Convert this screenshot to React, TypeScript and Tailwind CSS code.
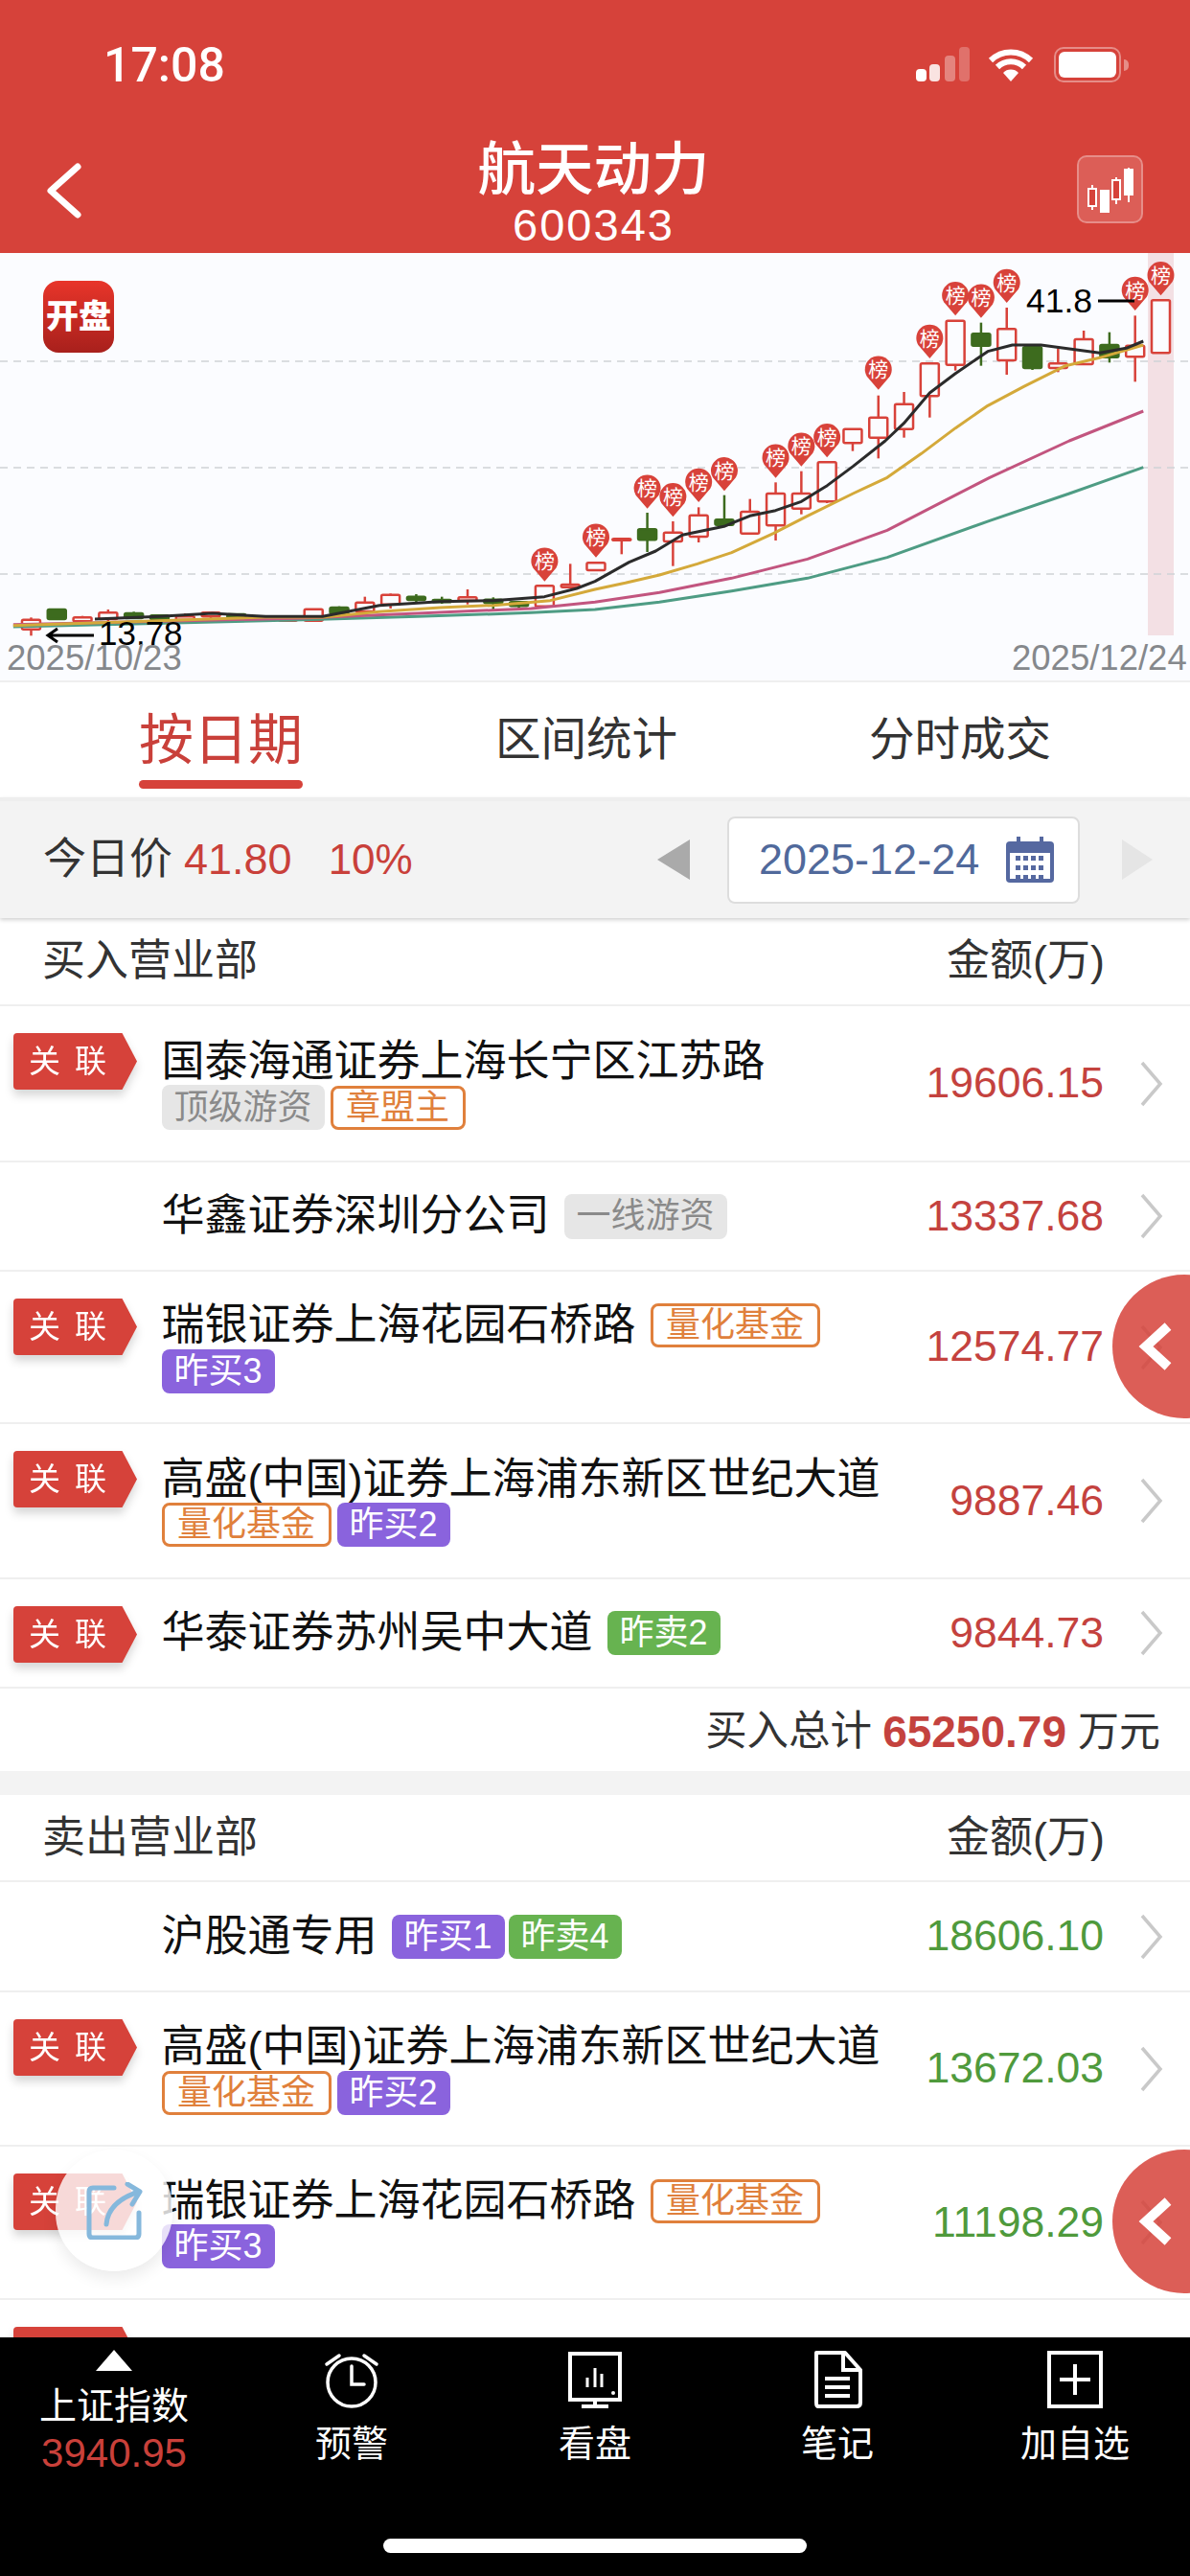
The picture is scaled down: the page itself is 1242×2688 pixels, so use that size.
const RED = '#D8423A';

// chart values are read off the zoomed picture: x in 2.525x, y in 3x units
const X = (i: number) => (82 + i * 67.66) / 2.525;
const Y = (p: number) => p / 3 - 4;

type Candle = { hi: number; top: number; bot: number; lo: number; down?: boolean; pin?: number };

const candles: Candle[] = [
  { hi: 1153, top: 1160, bot: 1190, lo: 1210 },
  { hi: 1128, top: 1128, bot: 1158, lo: 1158, down: true },
  { hi: 1148, top: 1153, bot: 1165, lo: 1165 },
  { hi: 1128, top: 1138, bot: 1158, lo: 1165 },
  { hi: 1135, top: 1140, bot: 1155, lo: 1158, down: true },
  { hi: 1147, top: 1147, bot: 1158, lo: 1158, down: true },
  { hi: 1140, top: 1150, bot: 1160, lo: 1165 },
  { hi: 1135, top: 1138, bot: 1150, lo: 1158 },
  { hi: 1143, top: 1143, bot: 1160, lo: 1160, down: true },
  { hi: 1152, top: 1152, bot: 1160, lo: 1160, down: true },
  { hi: 1150, top: 1155, bot: 1163, lo: 1163 },
  { hi: 1127, top: 1127, bot: 1163, lo: 1163 },
  { hi: 1118, top: 1122, bot: 1140, lo: 1145, down: true },
  { hi: 1088, top: 1106, bot: 1134, lo: 1142 },
  { hi: 1078, top: 1082, bot: 1112, lo: 1125 },
  { hi: 1080, top: 1088, bot: 1098, lo: 1105, down: true },
  { hi: 1088, top: 1098, bot: 1105, lo: 1110, down: true },
  { hi: 1065, top: 1090, bot: 1100, lo: 1112 },
  { hi: 1090, top: 1097, bot: 1108, lo: 1130, down: true },
  { hi: 1105, top: 1105, bot: 1117, lo: 1125, down: true },
  { hi: 1054, top: 1054, bot: 1118, lo: 1118, pin: 1040 },
  { hi: 985, top: 1050, bot: 1058, lo: 1062 },
  { hi: 982, top: 982, bot: 1005, lo: 1005, pin: 965 },
  { hi: 907, top: 907, bot: 910, lo: 955 },
  { hi: 825, top: 877, bot: 910, lo: 948, down: true, pin: 812 },
  { hi: 852, top: 887, bot: 915, lo: 992, pin: 838 },
  { hi: 808, top: 833, bot: 900, lo: 918, pin: 792 },
  { hi: 770, top: 847, bot: 863, lo: 868, down: true, pin: 757 },
  { hi: 782, top: 822, bot: 890, lo: 890 },
  { hi: 730, top: 765, bot: 865, lo: 912, pin: 716 },
  { hi: 695, top: 765, bot: 812, lo: 830, pin: 680 },
  { hi: 667, top: 667, bot: 790, lo: 795, pin: 652 },
  { hi: 563, top: 563, bot: 607, lo: 632 },
  { hi: 458, top: 527, bot: 590, lo: 655, pin: 440 },
  { hi: 447, top: 485, bot: 563, lo: 590 },
  { hi: 358, top: 358, bot: 460, lo: 527, pin: 342 },
  { hi: 224, top: 224, bot: 362, lo: 380, pin: 208 },
  { hi: 230, top: 265, bot: 302, lo: 365, down: true, pin: 215 },
  { hi: 183, top: 250, bot: 348, lo: 393, pin: 168 },
  { hi: 297, top: 307, bot: 372, lo: 378, down: true },
  { hi: 310, top: 358, bot: 372, lo: 385 },
  { hi: 255, top: 282, bot: 360, lo: 360 },
  { hi: 260, top: 300, bot: 338, lo: 355, down: true },
  { hi: 208, top: 302, bot: 337, lo: 415, pin: 192 },
  { hi: 160, top: 160, bot: 325, lo: 325, pin: 145 },
];

// [left half, right half] of each average line
const lines: { color: string; left: number[][]; right: number[][] }[] = [
  {
    color: '#4E9C84',
    left: [[35, 1182], [800, 1160], [1100, 1150], [1400, 1138]],
    right: [[0, 1128], [170, 1105], [360, 1070], [560, 1030], [770, 965], [1040, 850], [1250, 765], [1445, 683]],
  },
  {
    color: '#C2557F',
    left: [[35, 1175], [800, 1155], [1100, 1140], [1400, 1125]],
    right: [[0, 1105], [170, 1075], [360, 1030], [560, 970], [770, 880], [950, 770], [1040, 715], [1250, 600], [1445, 507]],
  },
  {
    color: '#D4A93A',
    left: [[35, 1178], [700, 1152], [850, 1152], [1000, 1135], [1160, 1122], [1300, 1115], [1450, 1100]],
    right: [[0, 1065], [80, 1045], [170, 1020], [270, 985], [360, 950], [470, 890], [560, 835], [680, 765], [770, 715], [860, 640], [950, 560], [1035, 490], [1130, 430], [1240, 365], [1330, 340], [1445, 300]],
  },
  {
    color: '#2B2B2B',
    left: [[250, 1158], [420, 1150], [560, 1140], [700, 1150], [850, 1150], [1000, 1115], [1160, 1103], [1300, 1100], [1435, 1088], [1520, 1062]],
    right: [[0, 1040], [90, 980], [160, 945], [230, 895], [340, 868], [408, 835], [476, 818], [544, 790], [612, 740], [680, 680], [765, 600], [814, 545], [882, 450], [949, 390], [1035, 320], [1100, 300], [1175, 300], [1250, 312], [1330, 325], [1400, 310], [1445, 288]],
  },
];

const linePoints = (left: number[][], right: number[][]) =>
  [...left, ...right.map(([x, y]) => [x + 1568, y])].map(([x, y]) => `${x / 2.525},${Y(y)}`).join(' ');

const KChart = () => (
  <div className="relative h-[448px] shrink-0 border-b-2 border-[#EFEFEF] bg-[#FBFCFF]">
    <svg width="1242" height="446" className="block">
      <rect x="1198" y="0" width="27" height="399" fill="#F3E0E4" />
      {[377, 488, 599].map((y) => (
        <line key={y} x1="0" x2="1242" y1={y - 264} y2={y - 264} stroke="#CFD2D6" strokeWidth="1.5" strokeDasharray="8 6" />
      ))}
      {candles.map((c, i) => {
        const color = c.down ? '#3D6B1E' : RED;
        return (
          <g key={i}>
            <line x1={X(i)} x2={X(i)} y1={Y(c.hi)} y2={Y(c.lo)} stroke={color} strokeWidth="2.5" />
            <rect
              x={X(i) - 9.5}
              y={Y(c.top)}
              width="19"
              height={Math.max(Y(c.bot) - Y(c.top), 1.5)}
              rx="1.5"
              fill={c.down ? color : '#FBFCFF'}
              stroke={color}
              strokeWidth="2.5"
            />
          </g>
        );
      })}
      {lines.map((l) => (
        <polyline key={l.color} points={linePoints(l.left, l.right)} fill="none" stroke={l.color} strokeWidth="3" strokeLinejoin="round" />
      ))}
      {candles.map((c, i) => {
        if (!c.pin) return null;
        const tip = Y(c.pin);
        const cy = tip - 21;
        return (
          <g key={i}>
            <path d={`M${X(i)} ${tip}L${X(i) - 12} ${cy + 7}A14 14 0 1 1 ${X(i) + 12} ${cy + 7}Z`} fill={RED} />
            <text x={X(i)} y={cy + 7.5} textAnchor="middle" fontSize="21" fill="#fff">榜</text>
          </g>
        );
      })}
      <path d="M98 399H52M60 392l-10 7 10 7" fill="none" stroke="#000" strokeWidth="3" />
      <text x="103" y="409" fontSize="35" fill="#000">13.78</text>
      <text x="7" y="435" fontSize="36.5" fill="#85888C">2025/10/23</text>
      <text x="1056" y="435" fontSize="36.5" fill="#85888C">2025/12/24</text>
      <text x="1071" y="62" fontSize="35.5" fill="#000">41.8</text>
      <line x1="1146" x2="1184" y1="50" y2="50" stroke="#000" strokeWidth="3" />
    </svg>
    <div className="absolute left-[45px] top-[29px] flex h-[75px] w-[74px] items-center justify-center rounded-[16px] bg-gradient-to-b from-[#E8352A] to-[#A8201C] text-[34px] font-black text-white">
      开盘
    </div>
  </div>
);

const StatusBar = () => (
  <div className="flex h-[144px] items-start justify-between pt-[44px]">
    <span className="ml-[108px] font-['Roboto'] text-[50px] font-medium leading-[48px] text-white">17:08</span>
    <div className="mr-[64px] flex items-start">
      <svg width="58" height="38" className="mt-[4px]">
        <rect x="1" y="24" width="11" height="13" rx="4" fill="#fff" />
        <rect x="15" y="19" width="11" height="18" rx="4" fill="#fff" fillOpacity="0.85" />
        <rect x="31" y="10" width="11" height="27" rx="4" fill="#fff" fillOpacity="0.35" />
        <rect x="46" y="1" width="11" height="36" rx="4" fill="#fff" fillOpacity="0.25" />
      </svg>
      <svg width="48" height="36" viewBox="0 0 48 36" className="ml-[18px] mt-[5px]">
        <path d="M3 14a30 30 0 0 1 42 0M10 21a20 20 0 0 1 28 0" fill="none" stroke="#fff" strokeWidth="6" />
        <path d="M24 36l-8-9a11 11 0 0 1 16 0z" fill="#fff" />
      </svg>
      <div className="ml-[21px] mt-[5px] flex items-center">
        <div className="h-[37px] w-[70px] rounded-[10px] border-[2.5px] border-white/40 p-[3px]">
          <div className="h-full w-full rounded-[6px] bg-white" />
        </div>
        <div className="ml-[3px] h-[12px] w-[5px] rounded-r-full bg-white/40" />
      </div>
    </div>
  </div>
);

const Header = () => (
  <div className="h-[264px] shrink-0 bg-[#D6423A]">
    <StatusBar />
    <div className="flex items-start">
      <div className="w-[118px] shrink-0 pl-[45px] pt-[25px]">
        <svg width="42" height="60" viewBox="0 0 42 60">
          <path d="M36 5L8 30l28 25" fill="none" stroke="#fff" strokeWidth="7" strokeLinecap="round" strokeLinejoin="round" />
        </svg>
      </div>
      <div className="flex-1 pr-[3px] text-center text-white">
        <div className="text-[60.5px] font-medium leading-[66px]">航天动力</div>
        <div className="text-[47px] leading-[50px] tracking-[2px]">600343</div>
      </div>
      <div className="w-[118px] shrink-0 pt-[18px]">
        <div className="flex h-[71px] w-[69px] items-center justify-center rounded-[10px] border-2 border-white/30 bg-white/15">
          <svg width="52" height="50" viewBox="0 0 52 50" fill="none" stroke="#fff" strokeWidth="2">
            <path d="M7 20v26M32 12v28M45 2v36" />
            <rect x="3" y="24" width="8" height="18" fill="#D6423A" />
            <rect x="16" y="26" width="8" height="22" fill="#fff" />
            <rect x="28" y="15" width="8" height="20" fill="#D6423A" />
            <rect x="41" y="4" width="8" height="26" fill="#fff" />
          </svg>
        </div>
      </div>
    </div>
  </div>
);

const Tabs = () => (
  <div className="flex h-[120px] shrink-0 items-start bg-white pl-[145px]">
    <div className="flex w-[171px] flex-col items-center pt-[28px]">
      <span className="whitespace-nowrap text-[57px] leading-[64px] text-[#C9403A]">按日期</span>
      <div className="mt-[10px] h-[9px] w-full rounded-full bg-[#D6423A]" />
    </div>
    <span className="ml-[201px] pt-[32px] text-[47.5px] leading-[56px] text-[#333]">区间统计</span>
    <span className="ml-[200px] pt-[32px] text-[47.5px] leading-[56px] text-[#333]">分时成交</span>
  </div>
);

const FilterBar = () => (
  <div className="relative z-10 flex h-[126px] shrink-0 items-center border-t-4 border-[#EEEEEE] bg-[#F3F3F3] pr-[39px] shadow-[0_2px_4px_rgba(0,0,0,0.18)]">
    <span className="ml-[45px] text-[45px] text-[#333]">今日价</span>
    <span className="ml-[12px] text-[45px] text-[#C9403A]">41.80</span>
    <span className="ml-[38px] text-[44px] text-[#C9403A]">10%</span>
    <svg width="34" height="42" className="ml-auto">
      <path d="M34 0v42L0 21z" fill="#AAAAAA" />
    </svg>
    <div className="ml-[39px] flex h-[91px] w-[368px] items-center rounded-[8px] border-2 border-[#DDDDDD] bg-white pl-[31px]">
      <span className="text-[45px] text-[#50699B]">2025-12-24</span>
      <svg width="50" height="48" viewBox="0 0 50 48" className="ml-[28px]">
        <rect x="0" y="5" width="50" height="43" rx="4" fill="#5568A0" />
        <rect x="4" y="17" width="42" height="27" fill="#fff" />
        <rect x="11" y="0" width="4" height="12" fill="#5568A0" />
        <rect x="35" y="0" width="4" height="12" fill="#5568A0" />
        {[10, 20, 30].map((y) =>
          [10, 18, 26, 34].map((x) => <rect key={`${x}-${y}`} x={x} y={y + 10} width="5" height="5" fill="#5568A0" />),
        )}
      </svg>
    </div>
    <svg width="32" height="42" className="ml-[44px]">
      <path d="M0 0v42l32-21z" fill="#E5E5E5" />
    </svg>
  </div>
);

type TagKind = 'gray' | 'orange' | 'purple' | 'green';

const Tag = ({ text, kind }: { text: string; kind: TagKind }) => {
  if (kind === 'orange') {
    return (
      <span className="flex h-[46px] shrink-0 items-center rounded-[8px] border-[3px] border-[#E0803C] bg-white px-[13.5px] text-[36px] text-[#E0803C]">
        {text}
      </span>
    );
  }
  if (kind === 'gray') {
    return (
      <span className="flex h-[47px] shrink-0 items-center rounded-[8px] bg-[#E6E6E6] px-[13px] text-[36px] text-[#8A8A8A]">
        {text}
      </span>
    );
  }
  return (
    <span
      className={`flex h-[46px] shrink-0 items-center rounded-[8px] px-[13px] text-[36px] text-white ${
        kind === 'purple' ? 'bg-[#8A63DD]' : 'bg-[#67B350]'
      }`}
    >
      {text}
    </span>
  );
};

const RelatedLabel = () => (
  <div className="drop-shadow-[0_6px_5px_rgba(0,0,0,0.16)]">
    <div className="flex h-[59px] w-[129px] items-center rounded-l-[4px] bg-[#D6423A] pl-[16px] text-[33px] tracking-[15px] text-white [clip-path:polygon(0_0,88%_0,100%_50%,88%_100%,0_100%)]">
      关联
    </div>
  </div>
);

interface RowProps {
  name: string;
  amount?: string;
  green?: boolean;
  related?: boolean;
  inline?: [string, TagKind][];
  below?: [string, TagKind][];
  height: string;
}

const Row = ({ name, amount, green, related, inline = [], below = [], height }: RowProps) => (
  <div className={`flex shrink-0 items-center border-b-2 border-[#EFEFEF] ${height}`}>
    <div className="ml-[14px] mt-[28px] w-[154.5px] shrink-0 self-start">{related && <RelatedLabel />}</div>
    <div className="min-w-0 flex-1">
      <div className={`flex h-[50px] items-center ${below.length > 0 ? 'pt-[3px]' : ''}`}>
        <span className="whitespace-nowrap text-[45px] text-[#111]">{name}</span>
        {inline.length > 0 && (
          <div className="ml-[15px] flex gap-[4px]">
            {inline.map(([t, k]) => (
              <Tag key={t} text={t} kind={k} />
            ))}
          </div>
        )}
      </div>
      {below.length > 0 && (
        <div className="flex h-[48px] items-center gap-[6px]">
          {below.map(([t, k]) => (
            <Tag key={t} text={t} kind={k} />
          ))}
        </div>
      )}
    </div>
    {amount && <span className={`text-[44.5px] ${green ? 'text-[#4F9A3C]' : 'text-[#C4423E]'}`}>{amount}</span>}
    <svg width="26" height="48" viewBox="0 0 26 48" className="ml-[37px] mr-[27px] shrink-0">
      <path d="M3 2l19 22L3 46" fill="none" stroke="#C9C9C9" strokeWidth="3.5" />
    </svg>
  </div>
);

const SectionHead = ({ title, height }: { title: string; height: string }) => (
  <div className={`flex shrink-0 items-center justify-between border-b-2 border-[#EFEFEF] pl-[44px] pr-[89px] text-[45px] text-[#333] ${height}`}>
    <span>{title}</span>
    <span>金额(万)</span>
  </div>
);

const SideTab = ({ className }: { className: string }) => (
  <div className={`absolute left-[1161px] flex h-[150px] w-[150px] items-center rounded-full bg-[#D6423A]/85 pl-[26px] ${className}`}>
    <svg width="38" height="50" viewBox="0 0 38 50">
      <path d="M32 4L9 25l23 21" fill="none" stroke="#fff" strokeWidth="10" />
    </svg>
  </div>
);

const ClockIcon = () => (
  <svg width="60" height="60" viewBox="0 0 60 60" fill="none" stroke="#fff" strokeWidth="3.5" strokeLinecap="round">
    <circle cx="30" cy="33" r="25" />
    <path d="M30 16v19h13M4 14L17 5M56 14L43 5" />
  </svg>
);

const ScreenIcon = () => (
  <svg width="56" height="60" viewBox="0 0 56 60" fill="none" stroke="#fff" strokeWidth="4">
    <rect x="2" y="3" width="52" height="48" />
    <path d="M28 52v5M14 58h28" />
    <path d="M20 38V28M28 38V18M35 38V24" strokeWidth="3" />
    <circle cx="47" cy="44" r="2" fill="#fff" stroke="none" />
  </svg>
);

const NoteIcon = () => (
  <svg width="52" height="60" viewBox="0 0 52 60" fill="none" stroke="#fff" strokeWidth="4">
    <path d="M4 2h30l16 18v34q0 4-4 4H6q-2 0-2-4z" strokeLinejoin="round" />
    <path d="M32 2v18h18M13 29h26M13 38h26M13 47h26" />
  </svg>
);

const PlusIcon = () => (
  <svg width="58" height="60" viewBox="0 0 58 60" fill="none" stroke="#fff" strokeWidth="4">
    <rect x="2" y="2" width="54" height="56" />
    <path d="M29 14v32M13 30h32" />
  </svg>
);

const NavItem = ({ label, children }: { label: string; children: React.ReactNode }) => (
  <div className="flex flex-col items-center pt-[14px]">
    <div className="h-[60px]">{children}</div>
    <span className="mt-[14px] text-[38px] leading-[46px] text-white">{label}</span>
  </div>
);

const BottomBar = () => (
  <div className="relative z-10 h-[249px] shrink-0 bg-black">
    <div className="grid h-[210px] grid-cols-[238px_258px_250px_256px_240px]">
      <div className="flex flex-col items-center pt-[13px]">
        <svg width="38" height="22">
          <path d="M19 0l19 22H0z" fill="#fff" />
        </svg>
        <span className="mt-[14px] text-[39px] leading-[46px] text-white">上证指数</span>
        <span className="mt-[4px] text-[42px] leading-[44px] text-[#C9403A]">3940.95</span>
      </div>
      <NavItem label="预警"><ClockIcon /></NavItem>
      <NavItem label="看盘"><ScreenIcon /></NavItem>
      <NavItem label="笔记"><NoteIcon /></NavItem>
      <NavItem label="加自选"><PlusIcon /></NavItem>
    </div>
    <div className="mx-auto h-[15px] w-[442px] rounded-full bg-white" />
  </div>
);

export default function App() {
  return (
    <div className="relative flex h-[2688px] w-[1242px] flex-col overflow-hidden bg-white font-['Liberation_Sans','Noto_Sans_CJK_SC',sans-serif]">
      <Header />
      <KChart />
      <Tabs />
      <FilterBar />

      <div className="flex min-h-0 flex-1 flex-col overflow-hidden">
        <SectionHead title="买入营业部" height="h-[92px]" />
        <Row related name="国泰海通证券上海长宁区江苏路" amount="19606.15" height="h-[163px]" below={[['顶级游资', 'gray'], ['章盟主', 'orange']]} />
        <Row name="华鑫证券深圳分公司" amount="13337.68" height="h-[114px]" inline={[['一线游资', 'gray']]} />
        <Row related name="瑞银证券上海花园石桥路" amount="12574.77" height="h-[159px]" inline={[['量化基金', 'orange']]} below={[['昨买3', 'purple']]} />
        <Row related name="高盛(中国)证券上海浦东新区世纪大道" amount="9887.46" height="h-[162px]" below={[['量化基金', 'orange'], ['昨买2', 'purple']]} />
        <Row related name="华泰证券苏州吴中大道" amount="9844.73" height="h-[114px]" inline={[['昨卖2', 'green']]} />
        <div className="flex h-[86px] shrink-0 items-center justify-end pr-[31px] pt-[4px] text-[#333]">
          <span className="text-[43.5px]">买入总计</span>
          <span className="ml-[11px] text-[46px] font-bold text-[#C4423E]">65250.79</span>
          <span className="ml-[12px] text-[43px]">万元</span>
        </div>
        <div className="h-[25px] shrink-0 bg-[#F3F3F3]" />
        <SectionHead title="卖出营业部" height="h-[91px]" />
        <Row green name="沪股通专用" amount="18606.10" height="h-[115px]" inline={[['昨买1', 'purple'], ['昨卖4', 'green']]} />
        <Row green related name="高盛(中国)证券上海浦东新区世纪大道" amount="13672.03" height="h-[161px]" below={[['量化基金', 'orange'], ['昨买2', 'purple']]} />
        <Row green related name="瑞银证券上海花园石桥路" amount="11198.29" height="h-[160px]" inline={[['量化基金', 'orange']]} below={[['昨买3', 'purple']]} />
        <Row green related name="中信证券上海分公司" height="h-[160px]" inline={[['量化基金', 'orange'], ['昨买2', 'purple']]} />
      </div>

      <BottomBar />

      <SideTab className="top-[1330px]" />
      <SideTab className="top-[2243px]" />

      <div className="absolute left-[58px] top-[2243px] flex h-[127px] w-[122px] items-center justify-center rounded-full bg-white/80 shadow-[0_8px_16px_rgba(0,0,0,0.08)]">
        <svg width="60" height="60" viewBox="0 0 60 60" fill="none" stroke="#85B8DC" strokeWidth="5" strokeLinecap="round" strokeLinejoin="round">
          <path d="M30 6H8q-4 0-4 4v44q0 4 4 4h44q4 0 4-4V32" />
          <path d="M22 44q2-24 34-34M44 2l13 8-8 13" />
        </svg>
      </div>
    </div>
  );
}
